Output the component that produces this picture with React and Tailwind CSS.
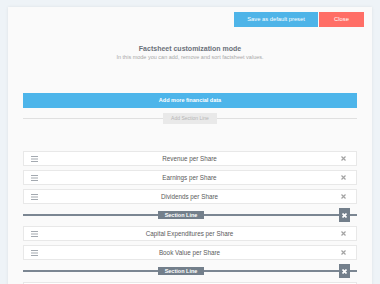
import React from "react";

const font = { fontFamily: '"Liberation Sans", Arial, sans-serif' };

function Burger() {
  return (
    <svg width="7" height="6" viewBox="0 0 7 6" className="block">
      <rect x="0" y="0" width="7" height="1" fill="#a3a9b0" />
      <rect x="0" y="2.5" width="7" height="1" fill="#a3a9b0" />
      <rect x="0" y="5" width="7" height="1" fill="#a3a9b0" />
    </svg>
  );
}

function XIcon({ color = "#a3a3a3", size = 5, sw = 1.2 }) {
  return (
    <svg width={size} height={size} viewBox="0 0 5 5" className="block">
      <path d="M0.5 0.5 L4.5 4.5 M4.5 0.5 L0.5 4.5" stroke={color} strokeWidth={sw} />
    </svg>
  );
}

function Row({ label }) {
  return (
    <div className="h-[15px] bg-white border border-[#e8e8e8] flex items-center pl-[7px] pr-[10px]">
      <Burger />
      <div className="flex-1 text-center text-[6.3px] text-[#5a5a5a]">{label}</div>
      <XIcon />
    </div>
  );
}

function SectionLine() {
  return (
    <div className="relative h-[14px] flex items-center">
      <div className="absolute left-0 right-0 top-[6px] h-[2px] bg-[#7b8692]" />
      <div className="relative flex-1 flex justify-center">
        <div className="bg-[#737f8b] text-white text-[5.5px] font-bold h-[8px] w-[46px] flex items-center justify-center">
          Section Line
        </div>
      </div>
      <div className="relative w-[11px] h-[14px] bg-[#737f8b] mr-[7px] flex items-center justify-center">
        <XIcon color="#ffffff" size={5} sw={1.6} />
      </div>
    </div>
  );
}

export default function App() {
  return (
    <div className="w-[380px] h-[284px] bg-[#eef3f7] overflow-hidden" style={font}>
      <div className="ml-[8px] mt-[7px] w-[364px] h-[300px] bg-[#fafafa] shadow-[0_0_3px_rgba(0,0,0,0.08)] pt-[5px]">
        <div className="flex justify-end gap-[1px] pr-[8px]">
          <div className="w-[84px] h-[15px] bg-[#4eb4e8] text-white text-[5.8px] flex items-center justify-center">
            Save as default preset
          </div>
          <div className="w-[45px] h-[15px] bg-[#ff6e66] text-white text-[5.8px] flex items-center justify-center">
            Close
          </div>
        </div>
        <div className="mt-[17px] text-center text-[7px] font-bold text-[#6b7079] leading-[10px]">
          Factsheet customization mode
        </div>
        <div className="text-center text-[5.5px] text-[#a8a8a8] leading-[7px]">
          In this mode you can add, remove and sort factsheet values.
        </div>
        <div className="pl-[15px] pr-[15px]">
          <div className="mt-[32px] h-[15px] bg-[#4db5ea] text-white text-[5.5px] font-bold flex items-center justify-center">
            Add more financial data
          </div>
          <div className="relative mt-[5px] h-[11px] flex justify-center">
            <div className="absolute left-0 right-0 top-[5px] h-px bg-[#e0e0e0]" />
            <div className="relative w-[54px] h-[11px] bg-[#e9e9e9] text-[#b5b5b5] text-[5px] flex items-center justify-center">
              Add Section Line
            </div>
          </div>
          <div className="mt-[27px] flex flex-col gap-[4px]">
            <Row label="Revenue per Share" />
            <Row label="Earnings per Share" />
            <Row label="Dividends per Share" />
            <SectionLine />
            <Row label="Capital Expenditures per Share" />
            <Row label="Book Value per Share" />
            <SectionLine />
            <div className="h-[15px] bg-white border border-[#e8e8e8]" />
          </div>
        </div>
      </div>
    </div>
  );
}
